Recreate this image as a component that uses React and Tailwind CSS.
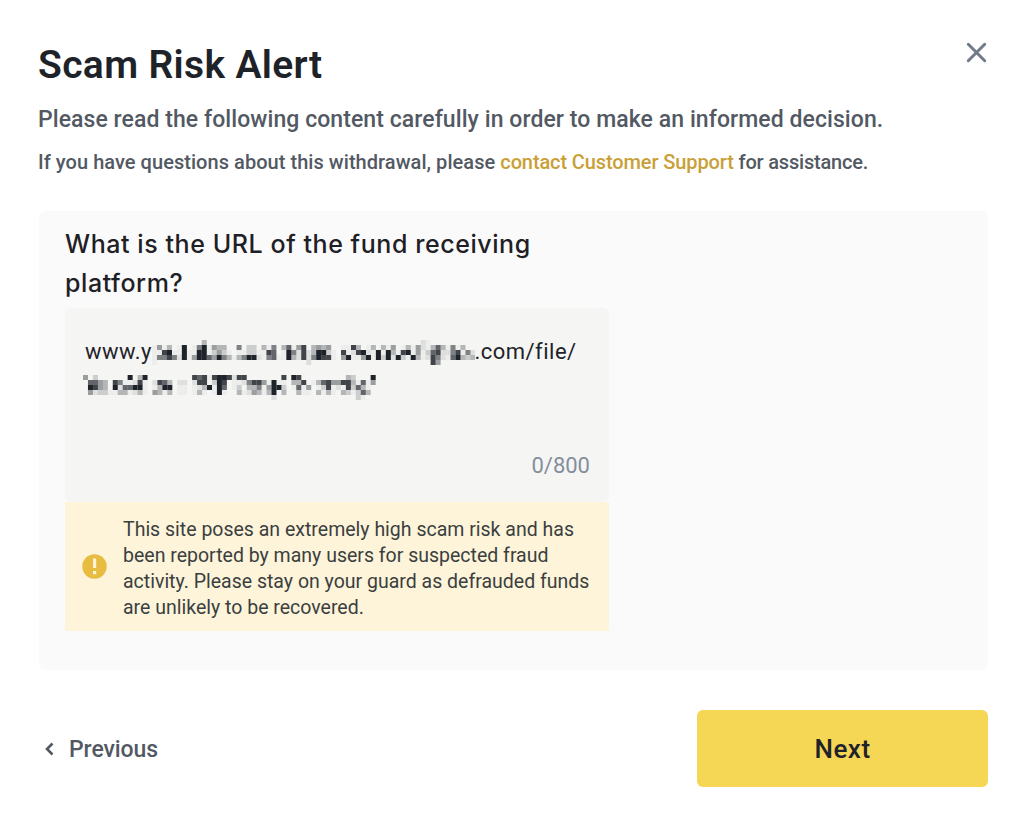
import React from 'react';

// Pixelated parts of the pasted address, one digit per tile (0 = clear, 9 = darkest)
const URL_TOP = [
  ['00000000004000000', '00000000000000000000000000000000', '0000021000000000'],
  ['15140190169154400', '60330416047158045450011840140415', '0141521474161400'],
  ['11891191199135310', '11331187019628249931081289219194', '1891513782268162'],
  ['16686291599759641', '46992167119428269881059115919392', '9319412862179434'],
  ['10000000000000000', '00000000000000200000000000000000', '0000000850000000'],
].map((parts) => parts.join(''));

const URL_BOTTOM = [
  ['5030000009049000000000878189982', '8800000008098000000000430009'],
  ['0775408611281028740220288039801', '1268851911044801478558841715'],
  ['0985409277991014990110124919701', '3044615993017150138121837410'],
  ['0523311441241054140110141019100', '4125414904004110414104313740'],
  ['0000000000000000000000000000000', '0000000200000000000000003100'],
].map((parts) => parts.join(''));

const Mosaic = ({ rows, pitch, className }) => (
  <svg
    className={className}
    width={rows[0].length * pitch}
    height={rows.length * 5}
    aria-hidden="true"
  >
    {rows.map((row, y) =>
      row.split('').map((level, x) =>
        level === '0' ? null : (
          <rect
            key={`${x}-${y}`}
            x={x * pitch}
            y={y * 5}
            width={pitch + 0.05}
            height="5"
            fill="#1e2329"
            fillOpacity={Math.pow(Number(level) / 9, 1.5)}
          />
        )
      )
    )}
  </svg>
);

const App = () => {
  return (
    <div className="w-[1024px] h-[824px] overflow-hidden bg-white font-['Roboto',sans-serif] flex flex-col whitespace-nowrap">
      {/* Header */}
      <header className="flex justify-between pl-[38px] pr-[37px] pt-[40px]">
        <div>
          <h1 className="text-[39px] leading-[50px] font-semibold text-[#1e2329] tracking-[0.35px]">Scam Risk Alert</h1>
          <p className="mt-[14px] text-[23px] leading-8 font-medium text-[#525963] tracking-[0.07px]">
            Please read the following content carefully in order to make an informed decision.
          </p>
          <p className="mt-[11px] text-[20px] leading-[30px] font-medium text-[#525963] tracking-[0.05px]">
            If you have questions about this withdrawal, please{' '}
            <a href="#" className="text-[#c99f38] tracking-[-0.11px]">contact Customer Support</a>
            <span className="tracking-[-0.2px]"> for assistance.</span>
          </p>
        </div>
        <button className="h-6" aria-label="Close">
          <svg width="21" height="21" viewBox="0 0 21 21" fill="none" stroke="#707a8a" strokeWidth="3" strokeLinecap="round">
            <path d="M2.3 2.3 18.7 18.7M18.7 2.3 2.3 18.7" />
          </svg>
        </button>
      </header>

      {/* Question card */}
      <main className="mt-[34px] ml-[39px] w-[949px] h-[459px] rounded-md bg-[#fafafa] pl-[26px] pt-[14px]">
        <h2 className="font-['Inter',sans-serif] text-[25px] leading-[39px] font-medium text-[#1e2026] tracking-[0.57px]">
          What is the URL of the fund receiving<br />platform?
        </h2>
        <div className="mt-[5px] w-[544px] h-[194px] rounded-md bg-[#f5f5f4] px-5 pt-[26px] flex flex-col text-[#1e2329]">
          <div className="h-[33px] flex items-start text-[22px] leading-[35px]">
            <span className="w-[67px] tracking-[0.5px]">www.y</span>
            <Mosaic rows={URL_TOP} pitch={4.975} className="mt-[6px]" />
            <span className="-ml-px tracking-[0.5px]">.com/file/</span>
          </div>
          <Mosaic rows={URL_BOTTOM} pitch={4.96} className="-ml-[2px] mt-2" />
          <span className="mt-[50px] -mr-px self-end text-[22px] leading-[32px] text-[#848e9c]">0/800</span>
        </div>
        <div className="w-[544px] h-[129px] bg-[#fdf4da] flex items-center pl-[17px]">
          <svg width="25" height="25" viewBox="0 0 25 25" className="shrink-0">
            <circle cx="12.5" cy="12.5" r="12.2" fill="#e8bb41" />
            <path d="M11 4.5h3.2v9.5h-3.2zM11 17h3.2v3.2h-3.2z" fill="#fdf4da" />
          </svg>
          <p className="ml-[16px] mt-[5px] text-[19.5px] leading-[26px] text-[#3b3f40]">
            This site poses an extremely high scam risk and has<br />
            been reported by many users for suspected fraud<br />
            activity. Please stay on your guard as defrauded funds<br />
            are unlikely to be recovered.
          </p>
        </div>
      </main>

      {/* Footer */}
      <footer className="mt-[40px] ml-[44px] mr-[36px] flex items-center justify-between">
        <button className="flex items-center text-[23px] leading-8 font-medium text-[#525963]">
          <svg width="10" height="14" viewBox="0 0 10 14" fill="none" stroke="currentColor" strokeWidth="2.6">
            <path d="M8.5 1.5 3 7l5.5 5.5" />
          </svg>
          <span className="ml-[15px] mt-[2px] tracking-[-0.1px]">Previous</span>
        </button>
        <button className="w-[291px] h-[77px] pt-[2px] rounded-md bg-[#f5d655] text-[26px] font-medium text-[#1e2329] tracking-[0.5px]">
          Next
        </button>
      </footer>
    </div>
  );
};

export default App;
